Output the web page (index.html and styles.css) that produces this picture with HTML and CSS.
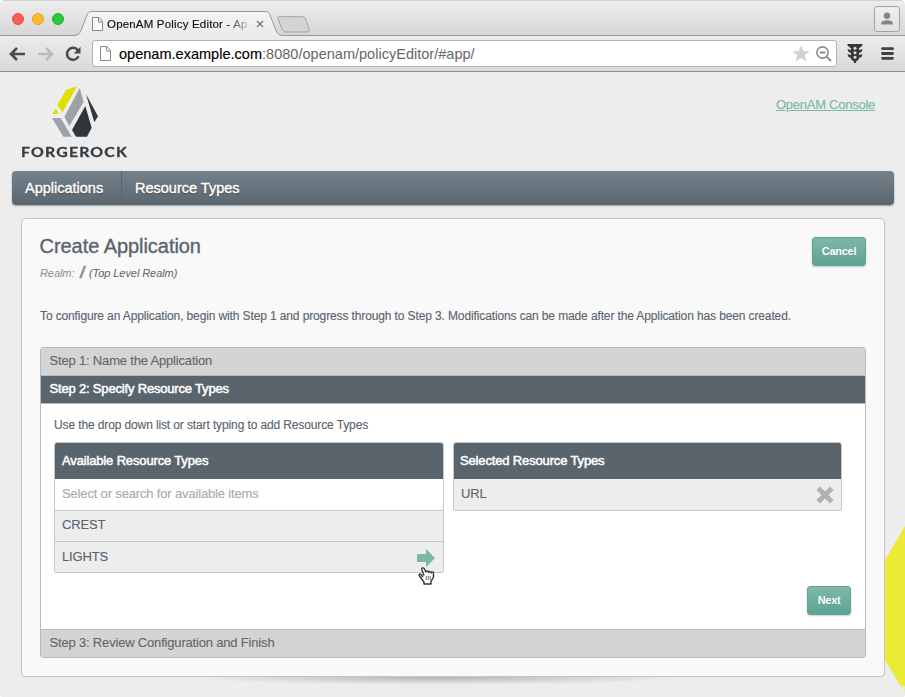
FILE: index.html
```html
<!DOCTYPE html>
<html lang="en">
<head>
<meta charset="utf-8">
<title>OpenAM Policy Editor - Applications</title>
<link rel="stylesheet" href="styles.css">
</head>
<body>
<div class="window">
  <header class="titlebar">
    <div class="lights"><i class="light red"></i><i class="light amber"></i><i class="light green"></i></div>
    <div class="tab">
      <svg class="tab-shape" width="212" height="36" viewBox="0 0 212 36"><defs><linearGradient id="tg" x2="0" y2="1"><stop stop-color="#f4f4f4"/><stop offset="1" stop-color="#ebebeb"/></linearGradient></defs><path d="M0 35.500C6 35.500 7 33 9 28L14 15C15.500 11.500 16.500 11.500 19 11.500H191C194 11.500 196 12 197 15L202.500 29C204.500 34 205.500 35.500 212 35.500V36H0Z" fill="url(#tg)"/><path d="M0 35.500C6 35.500 7 33 9 28L14 15C15.500 11.500 16.500 11.500 19 11.500H191C194 11.500 196 12 197 15L202.500 29C204.500 34 205.500 35.500 212 35.500" fill="none" stroke="#979797"/></svg>
      <svg class="page-icon tab-page" width="12" height="15" viewBox="0 0 12 15"><path d="M.5.500H7L10.500 4.500V13.500H.5ZM6.500.500V5H10.500" fill="#fcfcfc" stroke="#888"/></svg>
      <span class="tab-title">OpenAM Policy Editor - Ap</span>
      <svg class="tab-close" width="8" height="8" viewBox="0 0 8 8"><path d="M1 1L7 7M7 1L1 7" stroke="#777" stroke-width="1.300"/></svg>
    </div>
    <svg class="new-tab" width="34" height="18" viewBox="0 0 34 18"><path d="M3 .7H25C27 .7 28 1.500 28.700 3L32 13C32.500 15 32 16 30 16H9C7 16 6 15.500 5 13L1 3C.4 1.500 1 .7 3 .7Z" fill="#d4d4d4" stroke="#a2a2a2"/></svg>
    <div class="profile"><svg width="14" height="14" viewBox="0 0 14 14"><circle cx="7" cy="3.700" r="3.200" fill="#858585"/><path d="M1 12.500C1 9 4 8.300 7 8.300S13 9 13 12.500Z" fill="#858585"/></svg></div>
  </header>
  <div class="toolbar">
    <svg class="back" width="17" height="14" viewBox="0 0 17 14"><path d="M8 1L2 7L8 13M2 7H16" fill="none" stroke="#4a4a4a" stroke-width="2.600"/></svg>
    <svg class="forward" width="17" height="14" viewBox="0 0 17 14"><path d="M9 1L15 7L9 13M15 7H1" fill="none" stroke="#bbb" stroke-width="2.600"/></svg>
    <svg class="reload" width="16" height="16" viewBox="0 0 16 16"><path d="M12.800 4.200A6 6 0 1 0 13.500 10.300" fill="none" stroke="#4a4a4a" stroke-width="2.500"/><path d="M15.500.700V7.500H8.700Z" fill="#4a4a4a"/></svg>
    <div class="address">
      <svg class="page-icon" width="12" height="15" viewBox="0 0 12 15"><path d="M.5.500H7L10.500 4.500V14.500H.5ZM6.500.500V5H10.500" fill="#fcfcfc" stroke="#888"/></svg>
      <span class="url"><b>openam.example.com</b>:8080/openam/policyEditor/#app/</span>
      <svg class="star" width="18" height="17" viewBox="0 0 18 17"><path d="M9 0L11.300 5.900L17.600 6.200L12.700 10.200L14.400 16.400L9 12.900L3.600 16.400L5.300 10.200L.4 6.200L6.700 5.900Z" fill="#d2d2d2"/></svg>
      <svg class="glass" width="16" height="16" viewBox="0 0 16 16"><circle cx="6.500" cy="6.500" r="5.600" fill="none" stroke="#8b8b8b" stroke-width="1.600"/><path d="M3.700 6.500H9.300M10.800 10.800L15 15" fill="none" stroke="#8b8b8b" stroke-width="1.900"/></svg>
    </div>
    <svg class="signal" width="16" height="20" viewBox="0 0 16 20"><path d="M.5 0H15.500V1.500L12.500 4H3.500L.5 1.500ZM.5 5L4 6V9L1.500 8ZM15.500 5L12 6V9L14.500 8ZM.5 10L4 11V14L1.500 13ZM15.500 10L12 11V14L14.500 13ZM4 1H12V15L10 17H9.200V19H6.800V17H6L4 15Z" fill="#383838"/><circle cx="8" cy="4.200" r="1.500" fill="#ddd"/><circle cx="8" cy="8.700" r="1.500" fill="#ddd"/><circle cx="8" cy="13.200" r="1.500" fill="#ddd"/></svg>
    <svg class="menu" width="13" height="13" viewBox="0 0 13 13"><path d="M1.500 1.700H11.500M1.500 6.500H11.500M1.500 11.300H11.500" stroke="#434343" stroke-width="2.800" stroke-linecap="round"/></svg>
  </div>
  <main class="page">
    <svg class="backdrop" width="20" height="171" viewBox="0 0 20 171"><path d="M20 0L0 34V134L15.500 160H20Z" fill="#ecea35"/><path d="M15.500 160L20 167V160Z" fill="#ecebb0"/></svg>
    <div class="brand-row">
      <div class="brand">
        <svg class="mark" width="50" height="54" viewBox="120 30 150 162"><path d="M201 34L168 45L142 91L158 112ZM138 100L126 117H145Z" fill="#e2df00"/><path d="M209 39L221 81L178 153L163 125ZM126 129H152L185 185H160Z" fill="#9ba3a6"/><path d="M226 93L245 158L231 185H198L186 165ZM228 58L264 124L253 142Z" fill="#30373c"/></svg>
        <span class="wordmark">FORGEROCK</span>
      </div>
      <a class="console">OpenAM Console</a>
    </div>
    <nav class="nav"><span class="nav-item first">Applications</span><span class="nav-item">Resource Types</span></nav>
    <section class="card">
      <div class="card-head">
        <div><h1>Create Application</h1><p class="realm"><span>Realm:</span><em>/</em>(Top Level Realm)</p></div>
        <button class="btn cancel">Cancel</button>
      </div>
      <p class="intro">To configure an Application, begin with Step 1 and progress through to Step 3. Modifications can be made after the Application has been created.</p>
      <div class="steps">
        <div class="step">Step 1: Name the Application</div>
        <div class="step active">Step 2: Specify Resource Types</div>
        <div class="step-body">
          <p class="hint">Use the drop down list or start typing to add Resource Types</p>
          <div class="lists">
            <div class="list">
              <div class="list-head">Available Resource Types</div>
              <div class="row search">Select or search for available items</div>
              <div class="row"><span>CREST</span></div>
              <div class="row last short"><span>LIGHTS</span><svg class="arrow" width="18" height="18" viewBox="0 0 18 18"><path d="M0 5H9V0L18 9L9 18V13H0Z" fill="#7cb8aa"/></svg>
                <svg class="cursor" width="17" height="18" viewBox="0 0 17 18"><path d="M5 10L3 7.500C1.500 6 .5 8 1.500 9L6 15V17H13V14.500L15.500 10V6C15.500 4.500 13.500 4.500 13.300 6C13 4 11 4 10.700 5.500C10.500 3.500 8 3.500 7.800 5L6.500 2C5.500 0 3.300 1 3.800 2.500L6 8.500" fill="#fff" stroke="#333" stroke-width="1.400" stroke-linejoin="round"/><path d="M8.300 9V13M10.300 9V13M12.300 9V13" stroke="#777"/></svg></div>
            </div>
            <div class="list selected">
              <div class="list-head">Selected Resource Types</div>
              <div class="row last"><span>URL</span><svg class="remove" width="18" height="18" viewBox="0 0 18 18"><path d="M2.200 2.200L15.800 15.800M15.800 2.200L2.200 15.800" stroke="#b1b1b1" stroke-width="5"/></svg></div>
            </div>
          </div>
          <div class="actions"><button class="btn next">Next</button></div>
        </div>
        <div class="step final">Step 3: Review Configuration and Finish</div>
      </div>
    </section>
    <div class="card-shadow"></div>
  </main>
</div>
</body>
</html>
```
FILE: styles.css
```css
* { box-sizing: border-box; }
body { margin: 0; background: #fff; font-family: "Liberation Sans", Arial, sans-serif; color: #5a646d; font-size: 12px; }
svg { display: block; flex: none; }
p, h1 { margin: 0; }
.window { width: 905px; height: 697px; overflow: hidden; border-radius: 5px 5px 3px 3px; background: #ededed; }
.titlebar { height: 36px; display: flex; background: linear-gradient(#ededed, #d6d6d6); border-bottom: 1px solid #999; border-top: 1px solid #d2d2d2; }
.lights { display: flex; gap: 8px; padding: 12px 0 0 12px; width: 74px; }
.light { width: 12px; height: 12px; border-radius: 50%; }
.red { background: #fc5b57; border: 1px solid #e64b45; }
.amber { background: #fdbc2e; border: 1px solid #e5a31f; }
.green { background: #28c840; border: 1px solid #1fae31; }
.tab { position: relative; width: 200px; height: 36px; margin-top: -1px; padding-left: 18px; display: flex; align-items: flex-start; color: #111; }
.tab-shape { position: absolute; left: -1px; top: 0; }
.tab-page { position: relative; margin-top: 17px; }
.tab-title { position: relative; width: 143px; margin: 17px 0 0 3px; font-size: 11.5px; letter-spacing: .18px; line-height: 15px; white-space: nowrap; color: transparent; background: linear-gradient(90deg, #111 118px, #ddd 143px); -webkit-background-clip: text; background-clip: text; -webkit-text-stroke: .15px #1114; }
.tab-close { position: relative; margin: 20px 0 0 6px; }
.new-tab { margin: 15px 0 0 3px; }
.profile { margin: 5px 5px 0 auto; width: 26px; height: 26px; border: 1px solid #a2a2a2; border-radius: 3px; display: grid; place-items: center; background: linear-gradient(#eee, #e2e2e2); }
.toolbar { height: 36px; display: flex; align-items: center; background: linear-gradient(#ececec, #d9d9d9); border-bottom: 1px solid #8e8e8e; }
.back { margin-left: 9px; }
.forward { margin-left: 11px; }
.reload { margin-left: 11px; }
.address { width: 745px; height: 27px; margin-left: 11px; background: #fff; border: 1px solid #b2b2b2; border-radius: 3px; display: flex; align-items: center; padding-left: 7px; }
.url { margin-left: 7px; font-size: 14.5px; letter-spacing: .02px; color: #666; white-space: nowrap; }
.url b { font-weight: 400; color: #000; -webkit-text-stroke: .15px; }
.star { margin-left: auto; }
.glass { margin: 0 4px 0 6px; }
.signal { margin-left: 10px; }
.menu { margin-left: 18px; }
.page { position: relative; height: 625px; padding: 0 11px 0 12px; background: #ededed; }
.backdrop { position: absolute; right: 0; top: 454px; }
.brand-row { height: 99px; display: flex; justify-content: space-between; }
.brand { width: 126px; padding: 13px 0 0 9px; }
.mark { margin-left: 29px; }
.wordmark { display: block; width: max-content; font: 700 14px/17px Lato, sans-serif; color: #343b40; letter-spacing: 1.05px; margin-top: 4px; white-space: nowrap; transform: scaleX(1.13); transform-origin: 0 0; -webkit-text-stroke: .3px; }
.console { margin: 24px 19px 0 0; font-size: 13px; line-height: 17px; letter-spacing: -.26px; color: #7cb8aa; text-decoration: underline; -webkit-text-stroke: .15px; }
.nav { height: 34px; display: flex; border-radius: 4px; background: linear-gradient(#75818b, #5b666f); box-shadow: 0 1px 2px #0005; color: #fff; font-size: 14.5px; line-height: 34px; text-shadow: 0 1px 1px #333; }
.nav-item { padding: 0 13px; -webkit-text-stroke: .4px #fff; white-space: nowrap; }
.first { width: 110px; border-right: 1px solid #59646d; }
.card { position: relative; z-index: 1; width: 864px; height: 459px; margin: 13px 0 0 9px; padding: 0 18px; border: 1px solid #c4c4c4; border-radius: 4px; background: #f9f9f9; }
.card-head { display: flex; justify-content: space-between; height: 84px; padding-top: 15px; }
h1 { font-size: 20px; font-weight: 400; line-height: 24px; letter-spacing: -.05px; margin-left: -.5px; -webkit-text-stroke: .35px; }
.realm { font-size: 11px; font-style: italic; line-height: 16px; letter-spacing: -.07px; margin-top: 7px; display: flex; }
.realm span { width: 40px; color: #8c8c8c; }
.realm em { width: 9px; font-size: 16px; font-weight: 700; line-height: 15px; color: #8c8c8c; -webkit-text-stroke: .5px; }
.btn { height: 29px; margin: 0; padding: 0 0 1px; border: 1px solid #5ca594; border-radius: 3px; background: linear-gradient(#80b7aa, #5ca592); box-shadow: 0 1px 2px #0003; color: #fff; font: 700 11px "Liberation Sans", Arial, sans-serif; letter-spacing: -.3px; text-shadow: 0 0 1px #5ca594; }
.cancel { width: 54px; margin-top: 3px; }
.intro { line-height: 16px; letter-spacing: -.122px; margin-top: 5px; height: 39px; white-space: nowrap; -webkit-text-stroke: .12px; }
.steps { width: 826px; border: 1px solid #b9b9b9; border-radius: 3px; background: #fff; overflow: hidden; }
.step { height: 28px; padding-left: 8.5px; border-bottom: 1px solid #b9b9b9; background: #d4d4d4; font-size: 13px; line-height: 26px; letter-spacing: -.18px; color: #666; -webkit-text-stroke: .12px; }
.active { background: #5a646d; color: #fff; -webkit-text-stroke: .5px #fff; }
.step-body { height: 225px; padding: 13px 13px 0; }
.hint { line-height: 16px; letter-spacing: -.12px; -webkit-text-stroke: .12px; }
.lists { display: flex; gap: 9px; align-items: flex-start; margin-top: 9px; height: 144px; }
.list { width: 390px; border: 1px solid #c8c8c8; border-radius: 3px 3px 2px 2px; }
.selected { width: 389px; }
.list-head { height: 36px; padding-left: 7px; background: #5a646d; border-radius: 2px 2px 0 0; color: #fff; font-size: 13px; line-height: 35px; letter-spacing: -.15px; -webkit-text-stroke: .5px #fff; }
.selected .list-head { padding-left: 6px; }
.row { position: relative; height: 31px; padding: 0 7px; border-bottom: 1px solid #c8c8c8; background: #ededed; font-size: 13px; line-height: 28px; letter-spacing: -.16px; display: flex; justify-content: space-between; -webkit-text-stroke: .12px; }
.row.last { border-bottom: 0; line-height: 30px; }
.row.short { height: 30px; padding-right: 8px; }
.row.search { height: 32px; background: #fff; color: #aaa; line-height: 29px; }
.arrow, .remove { margin-top: 7px; }
.cursor { position: absolute; right: 8px; top: 25px; z-index: 2; }
.actions { display: flex; justify-content: flex-end; }
.next { width: 44px; margin-right: 1px; }
.final { border-top: 1px solid #b9b9b9; border-bottom: 0; }
.card-shadow { width: 500px; height: 8px; margin-left: 175px; background: radial-gradient(ellipse 50% 100% at 50% 0, #b4b4b4, #ededed00); }
```
